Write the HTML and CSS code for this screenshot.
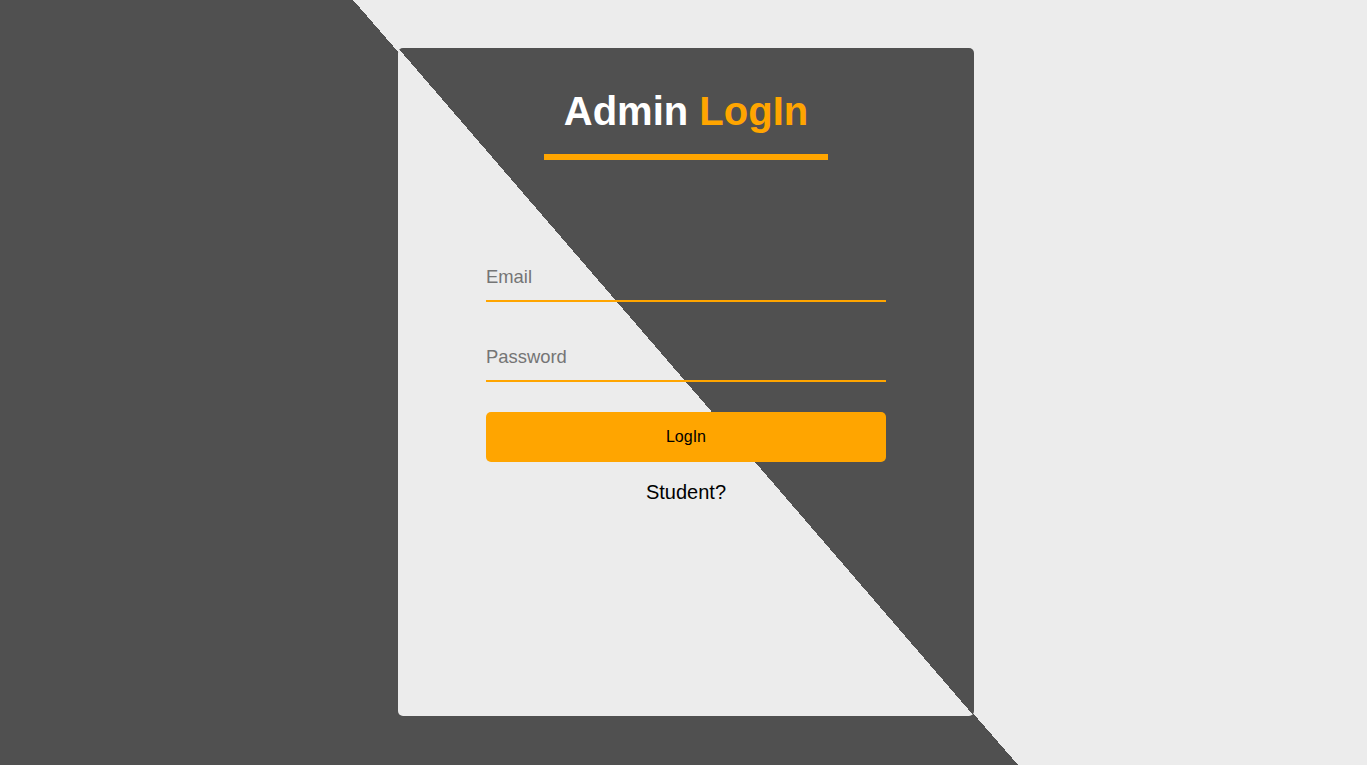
FILE: index.html
```html
<!DOCTYPE html>
<html lang="en">
<head>
<meta charset="utf-8">
<title>Admin LogIn</title>
<link rel="stylesheet" href="styles.css">
</head>
<body>
<div class="page">
  <div class="card">
    <h1 class="title"><span class="title-white">Admin</span> <span class="title-orange">LogIn</span></h1>
    <div class="title-bar"></div>
    <form class="form">
      <input class="field" type="email" placeholder="Email">
      <input class="field field-second" type="password" placeholder="Password">
      <button class="btn" type="button">LogIn</button>
      <a class="switch" href="#">Student?</a>
    </form>
  </div>
</div>
</body>
</html>
```

FILE: styles.css
```css
html, body {
  margin: 0;
  padding: 0;
}

body {
  font-family: "Liberation Sans", Arial, sans-serif;
}

.page {
  box-sizing: border-box;
  width: 100%;
  height: 100vh;
  display: flex;
  align-items: flex-start;
  justify-content: center;
  padding-left: 5px;
  padding-top: 48px;
  background: linear-gradient(49deg, #505050 50.1%, #ececec 50.1%);
}

.card {
  box-sizing: border-box;
  width: 576px;
  height: 668px;
  border-radius: 5px;
  background: linear-gradient(to top right, #ececec 50%, #505050 50%);
  display: flex;
  flex-direction: column;
  align-items: center;
  padding-top: 40px;
}

.title {
  margin: 0;
  font-size: 40px;
  line-height: 46px;
  font-weight: bold;
}

.title-white {
  color: #ffffff;
}

.title-orange {
  color: #ffa500;
}

.title-bar {
  width: 284px;
  height: 6px;
  margin-top: 20px;
  background: #ffa500;
}

.form {
  width: 400px;
  display: flex;
  flex-direction: column;
  align-items: stretch;
  margin-top: 96px;
}

.field {
  box-sizing: content-box;
  height: 42px;
  padding: 0 0 2px 0;
  margin: 0;
  border: none;
  border-bottom: 2px solid #ffa500;
  background: transparent;
  font-family: "Liberation Sans", Arial, sans-serif;
  font-size: 18.4px;
  color: #333;
  outline: none;
}

.field::placeholder {
  color: #757575;
}

.field-second {
  margin-top: 34px;
}

.btn {
  margin-top: 30px;
  height: 50px;
  border: none;
  border-radius: 5px;
  background: #ffa500;
  color: #000;
  font-family: "Liberation Sans", Arial, sans-serif;
  font-size: 16px;
  padding: 0;
}

.switch {
  align-self: center;
  margin-top: 19px;
  font-size: 20px;
  line-height: 23px;
  color: #000;
  text-decoration: none;
}
```
